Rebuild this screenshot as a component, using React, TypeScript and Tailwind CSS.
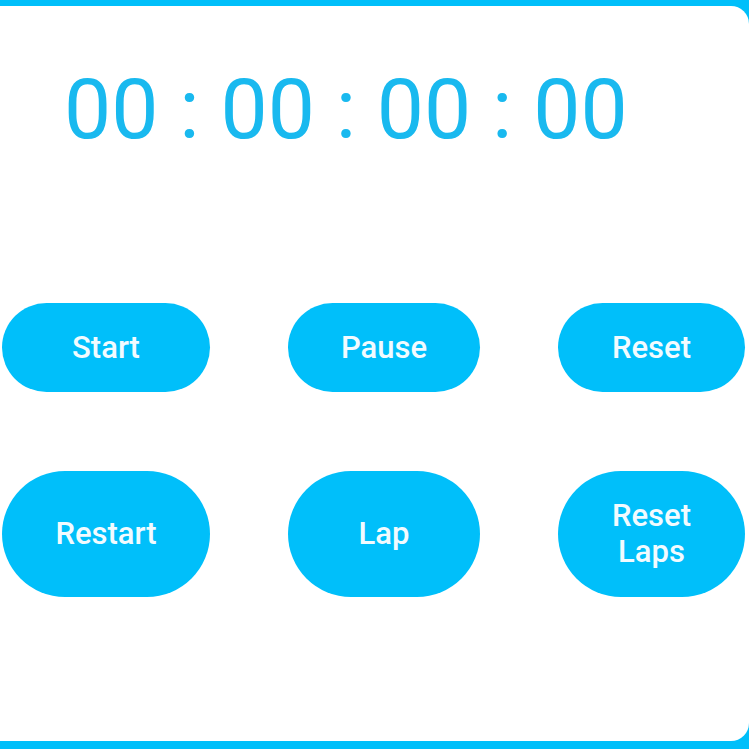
import React from 'react';

const buttons = [
  { label: 'Start', w: 'w-[208px]' },
  { label: 'Pause', w: 'w-[192px]' },
  { label: 'Reset', w: 'w-[187px]' },
  { label: 'Restart', w: 'w-[208px]' },
  { label: 'Lap', w: 'w-[192px]' },
  { label: 'Reset Laps', w: 'w-[187px]' },
];

const App = () => {
  return (
    <div className="h-[749px] w-full overflow-hidden bg-[#00bffa] pt-[6px] pb-[8px] font-['Roboto',sans-serif]">
      <div className="h-full bg-white rounded-r-[18px] pt-[62px]">
        <div className="pl-[64px] text-[84px] leading-none text-[#19b9ef] whitespace-pre">
          00 : 00 : 00 : 00
        </div>

        <div className="mt-[151px] pl-[2px] grid grid-cols-[208px_192px_187px] gap-x-[78px] gap-y-[79px]">
          {buttons.map((b, i) => (
            <button
              key={b.label}
              className={`${b.w} ${i < 3 ? 'h-[89px]' : 'h-[126px]'} rounded-full bg-[#00bffa] text-[#f2fbff] text-[31px] font-medium leading-[36px] flex items-center justify-center`}
            >
              {b.label === 'Reset Laps' ? (
                <span className="text-center">
                  Reset
                  <br />
                  Laps
                </span>
              ) : (
                b.label
              )}
            </button>
          ))}
        </div>
      </div>
    </div>
  );
};

export default App;
